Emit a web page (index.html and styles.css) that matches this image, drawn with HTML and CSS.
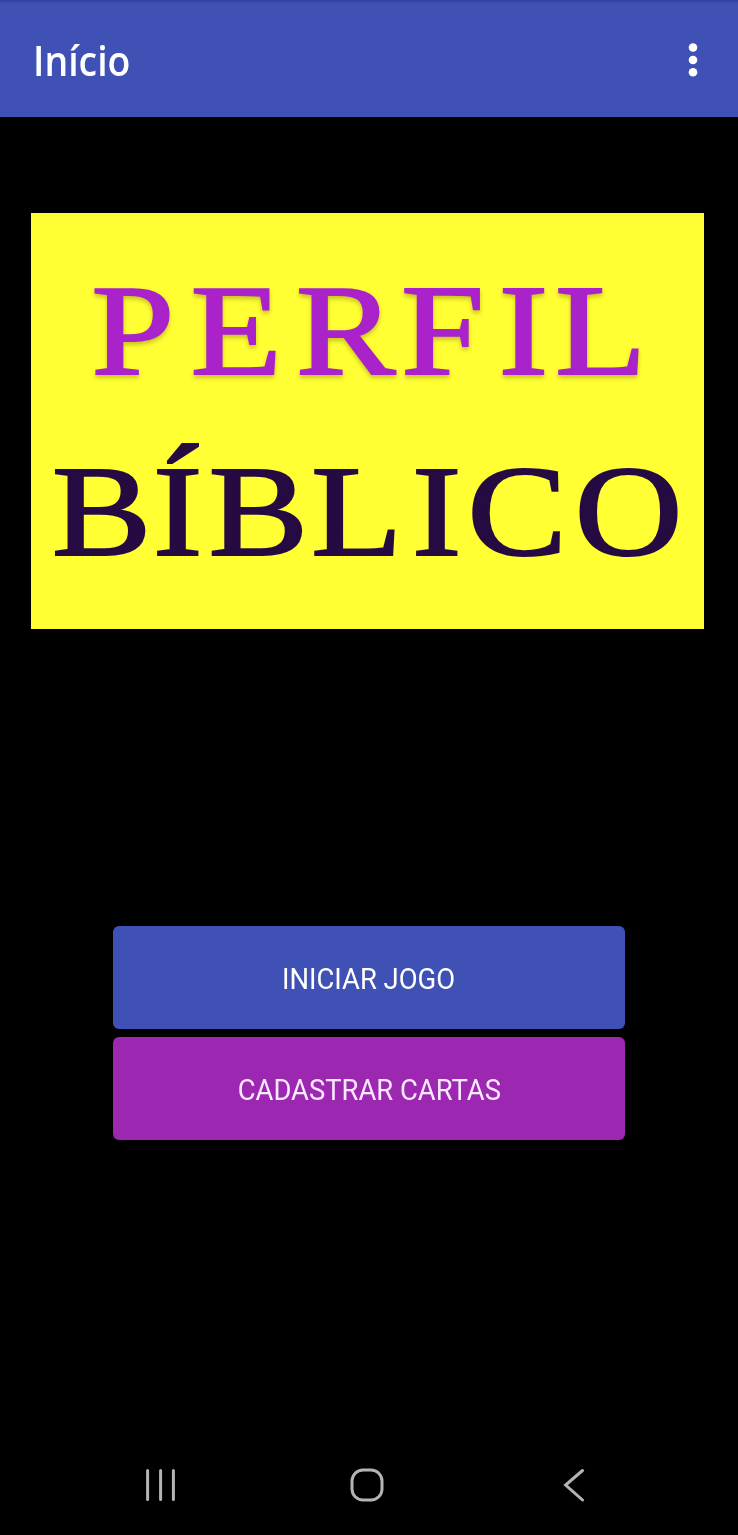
FILE: index.html
```html
<!DOCTYPE html>
<html lang="pt-BR">
<head>
<meta charset="utf-8">
<title>Início</title>
<link rel="stylesheet" href="styles.css">
</head>
<body>
<div class="screen">
  <header class="app-bar">
    <h1 class="app-title">Início</h1>
    <svg class="more" width="10" height="36" viewBox="0 0 10 36" fill="#fff" aria-label="Menu"><circle cx="5" cy="5.5" r="4.3"/><circle cx="5" cy="18" r="4.3"/><circle cx="5" cy="30.3" r="4.3"/></svg>
  </header>
  <main class="content">
    <svg class="logo" width="673" height="416" viewBox="0 0 673 416">
      <g transform="scale(1.16 1)">
        <text class="word word-top" y="161.5" x="52 137.6 228.3 319 403 451.8">PERFIL</text>
        <text class="word word-bottom" y="342.5" x="17.8 104.9 153 241.3 328.2 376 468.6">BÍBLICO</text>
      </g>
    </svg>
    <div class="actions">
      <button class="btn btn-play"><span class="label">INICIAR JOGO</span></button>
      <button class="btn btn-cards"><span class="label">CADASTRAR CARTAS</span></button>
    </div>
  </main>
  <nav class="nav-bar">
    <svg width="32" height="34" viewBox="0 0 32 34"><path d="M2.6 2.6v28.8M15.6 2.6v28.8M28.4 2.6v28.8"/></svg>
    <svg class="home" width="34" height="34" viewBox="0 0 34 34"><rect x="2" y="2" width="30" height="30" rx="11"/></svg>
    <svg width="22" height="34" viewBox="0 0 22 34"><path d="M19.5 2.5L2.6 17l16.9 15"/></svg>
  </nav>
</div>
</body>
</html>
```
FILE: styles.css
```css
* { box-sizing: border-box; }
body { margin: 0; background: #000; }
.screen {
  width: 738px;
  height: 1535px;
  display: flex;
  flex-direction: column;
  background: #000;
  font-family: Roboto, "Open Sans", sans-serif;
  color: #fff;
  overflow: hidden;
}
.app-bar {
  height: 117px;
  flex: none;
  display: flex;
  align-items: center;
  justify-content: space-between;
  padding: 3px 40px 0 33px;
  background: linear-gradient(#303f9f, #3f51b5 4px);
}
.app-title {
  margin: 0;
  font-family: "Open Sans", sans-serif;
  font-size: 42px;
  line-height: 56px;
  font-weight: 600;
  transform: scaleX(.89);
  transform-origin: left;
}
.content {
  flex: 1;
  display: flex;
  flex-direction: column;
  padding-top: 96px;
}
.logo { display: block; margin-left: 31px; background: #ffff33; }
.word {
  font-family: "Liberation Serif", serif;
  font-size: 129px;
  stroke-width: 1.9;
}
.word-top {
  fill: #a922ca;
  stroke: #a922ca;
  filter: drop-shadow(0 3px 2px rgba(80, 60, 0, .3));
}
.word-bottom { fill: #260b42; stroke: #260b42; }
.actions {
  display: flex;
  flex-direction: column;
  gap: 8px;
  width: 512px;
  margin: 297px 0 0 113px;
}
.btn {
  height: 103px;
  border: 0;
  border-radius: 6px;
  padding: 2px 0 0;
  color: #fff;
  font-family: inherit;
  font-size: 29px;
  display: flex;
  align-items: center;
  justify-content: center;
}
.label { display: block; white-space: nowrap; transform: scaleX(.945); }
.btn-play { background: #3f51b5; }
.btn-cards { background: #9c27b0; color: #fbe9ff; }
.nav-bar {
  display: flex;
  align-items: center;
  justify-content: space-between;
  height: 100px;
  padding: 0 153px 0 145px;
}
.nav-bar svg {
  fill: none;
  stroke: #b4b4b4;
  stroke-width: 3;
  stroke-linecap: round;
}
.nav-bar .home { margin-right: 7px; }
```
